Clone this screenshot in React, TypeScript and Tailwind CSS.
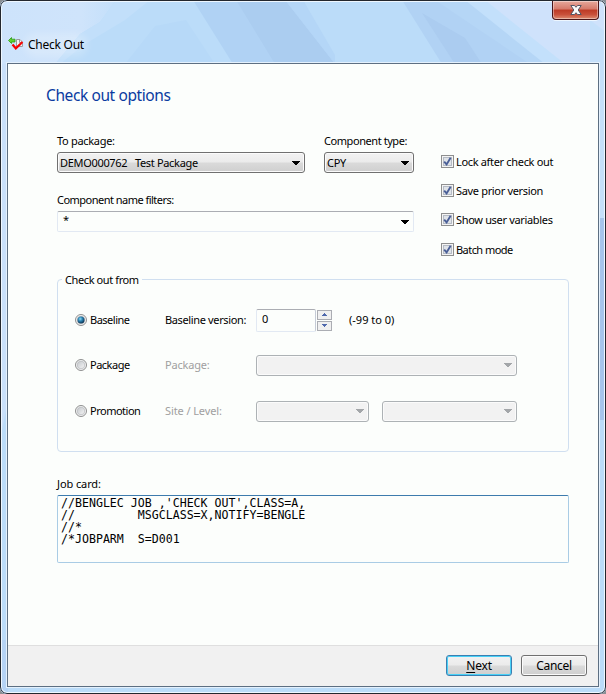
import React from "react";

const ui = "font-['Noto_Sans','Open_Sans',sans-serif]";

function Label({ children, className = "tracking-[-0.3px]" }: { children: React.ReactNode; className?: string }) {
  return (
    <span className={`block h-4 whitespace-pre text-[11px] leading-4 ${className}`}>{children}</span>
  );
}

function Arrow({ className = "fill-black" }: { className?: string }) {
  return (
    <svg width="8" height="4" viewBox="0 0 8 4" shapeRendering="crispEdges" className={`shrink-0 ${className}`}>
      <path d="M0 0h8v1h-1v1h-1v1h-1v1h-2v-1h-1v-1h-1v-1h-1z" />
    </svg>
  );
}

function Combo({ text = "", disabled = false, className = "" }: { text?: string; disabled?: boolean; className?: string }) {
  const look = disabled
    ? "border-[#adb2b5] bg-[#f2f2f2]"
    : "border-[#707070] bg-[linear-gradient(#f2f2f2_0%,#ebebeb_48%,#dadada_52%,#cfcfcf_100%)]";
  return (
    <div className={`flex h-[21px] shrink-0 items-center justify-between rounded-[3px] border pl-0.5 pr-1 shadow-[inset_0_0_0_1px_#fbfbfb] ${look} ${className}`}>
      <Label className="tracking-[-0.32px]">{text}</Label>
      <Arrow className={disabled ? "fill-[#a3a6a9]" : "fill-black"} />
    </div>
  );
}

function Check({ label, tracking = "tracking-[-0.33px]", className = "" }: { label: string; tracking?: string; className?: string }) {
  return (
    <div className={`flex h-[13px] items-center gap-0.5 ${className}`}>
      <svg width="13" height="13" viewBox="0 0 13 13" className="shrink-0">
        <rect x="0.5" y="0.5" width="12" height="12" fill="#f4f4f4" stroke="#8e8f8f" />
        <rect x="2.5" y="2.5" width="8" height="8" fill="#dfe3e8" stroke="#b5bbc4" />
        <path d="M3.2 6.6L5.6 9.4L9.6 2.8" fill="none" stroke="#4a5f97" strokeWidth="1.9" />
      </svg>
      <Label className={tracking}>{label}</Label>
    </div>
  );
}

function Radio({ label, on = false }: { label: string; on?: boolean }) {
  return (
    <div className="flex w-[90px] shrink-0 items-center gap-[3px]">
      <svg width="12" height="12" viewBox="0 0 12 12" className="shrink-0">
        <defs>
          <radialGradient id="dot" cx="0.4" cy="0.35" r="0.65">
            <stop offset="0" stopColor="#8fdcf5" />
            <stop offset="0.45" stopColor="#2e86b5" />
            <stop offset="1" stopColor="#0c3454" />
          </radialGradient>
          <linearGradient id="well" x1="0" y1="0" x2="1" y2="1">
            <stop offset="0" stopColor="#c4c8cc" />
            <stop offset="1" stopColor="#f6f6f6" />
          </linearGradient>
        </defs>
        <circle cx="6" cy="6" r="5.5" fill="#f4f4f4" stroke="#8e8f8f" />
        <circle cx="6" cy="6" r="3.8" fill="url(#well)" stroke="#b4b8bc" strokeWidth="0.7" />
        {on && <circle cx="6" cy="6" r="3.5" fill="url(#dot)" />}
      </svg>
      <Label className="tracking-[-0.5px]">{label}</Label>
    </div>
  );
}

function SpinButton({ up = false }: { up?: boolean }) {
  return (
    <div className="flex h-2.5 w-[15px] items-center justify-center border border-[#abadb3] bg-[#f0f0f0]">
      <svg width="5" height="3" viewBox="0 0 5 3" shapeRendering="crispEdges" className="fill-[#5069ad]">
        <path d={up ? "M2 0h1v1h1v1h1v1h-5v-1h1v-1h1z" : "M0 0h5v1h-1v1h-1v1h-1v-1h-1v-1h-1z"} />
      </svg>
    </div>
  );
}

function TitleGlass() {
  return (
    <svg width="606" height="694" className="absolute inset-0">
      <defs>
        <linearGradient id="sheen" x1="0" y1="0" x2="1" y2="0">
          <stop offset="0" stopColor="#cde3fb" />
          <stop offset="0.7" stopColor="#cfe4fb" />
          <stop offset="1" stopColor="#c3dffa" />
        </linearGradient>
      </defs>
      <rect width="606" height="694" fill="#bbdcf9" />
      <path d="M0 0H116L100 22L80 34L55 64H0z" fill="url(#sheen)" />
      <path d="M116 0H150L125 20L85 44L60 64H55L80 34L100 22z" fill="#c2dffa" />
      <path d="M155 26L125 64H215L186 20z" fill="#b7d9f8" />
      <path d="M193 0H303L335 64H233z" fill="#b0d2f4" />
      <path d="M236 0H285L335 64H275z" fill="#abcdf0" />
      <path d="M285 0H303L335 55V64z" fill="#b4d6f7" />
      <path d="M402 0H440L540 64H442z" fill="#b1d2f4" />
      <path d="M422 13L465 38L482 64H455z" fill="#abccf0" />
      <path d="M435 0H480L565 64H530z" fill="#b5d6f6" />
      <path d="M465 0H500L565 64H545z" fill="#c3e0fb" />
      <path d="M485 0H606V190H598L565 64z" fill="#cfe2fb" />
      <path d="M590 20L606 32V220H590z" fill="#c5e0fa" />
      <path d="M598 218H606V420H598z" fill="#a5c5eb" />
      <path d="M0 64H8V400L0 440z" fill="#c9e0fa" />
      <path d="M0 640H8V694H0z" fill="#b5d3f5" />
    </svg>
  );
}

function CheckOutIcon() {
  return (
    <svg width="16" height="14" viewBox="0 0 16 14" className="shrink-0">
      <path d="M8.5 2.5h3.5l2.500 2.500v4.500h-6z" fill="#f4f4f4" stroke="#9a9a9a" />
      <path d="M11.500 2.500v3h3" fill="none" stroke="#9a9a9a" />
      <path d="M0.500 3.500L3.500 0.500V2.200H7V5H3.500V6.500z" fill="#5fd32f" stroke="#2d9a14" strokeWidth="0.8" />
      <path d="M4.500 7.500L7.800 11.300L14.500 5" fill="none" stroke="#f80000" strokeWidth="2.2" />
    </svg>
  );
}

export default function App() {
  return (
    <div className={`relative h-[694px] w-[606px] overflow-hidden bg-[#8a8f94] text-black ${ui}`}>
      <div className="relative flex h-[694px] w-[606px] flex-col overflow-hidden rounded-[7px]">
        <TitleGlass />
        <div className="absolute inset-0 rounded-[7px] border border-[#23272e] shadow-[inset_0_0_0_1px_#eef7ff]" />

        <header className="relative flex h-[63px] shrink-0 justify-between pl-2 pr-[7px]">
          <div className="flex items-start gap-1 pt-[37px]">
            <CheckOutIcon />
            <span className="rounded-full bg-white/20 text-[12px] leading-4 tracking-[-0.25px] shadow-[0_0_7px_4px_rgba(255,255,255,0.2)]">Check Out</span>
          </div>
          <button className="mt-px flex h-[19px] w-[47px] items-center justify-center rounded-b-[4px] border border-t-0 border-[#4a1518] bg-[linear-gradient(#e6a89c_0%,#d5796a_45%,#bd3a25_50%,#c9503a_75%,#dd8b70_100%)] shadow-[inset_0_0_0_1px_rgba(255,255,255,0.4),0_1px_0_#eef7ff]">
            <svg width="12" height="10" viewBox="0 0 12 10">
              <path d="M.8 .5h3.700L6 2.300L7.500 .5H11.200L8.200 5L11.200 9.500H7.500L6 7.700L4.500 9.500H.8L3.800 5z" fill="#fafafa" stroke="#535666" strokeWidth="1" />
            </svg>
          </button>
        </header>

        <main className="relative mx-[7px] flex h-[624px] shrink-0 flex-col border border-[#5d6f82] bg-[#fcfefc] shadow-[0_0_0_1px_#e4f1fd]">
          <div className="flex h-[581px] shrink-0 flex-col pl-[49px]">
            <h1 className="-ml-[11px] mt-5 h-[22px] whitespace-nowrap text-[15.5px] leading-[22px] tracking-[-0.4px] text-[#0a3ba0]">Check out options</h1>

            <div className="mt-[27px] flex">
              <div className="w-[357px]">
                <div className="flex gap-[19px]">
                  <div className="flex w-[248px] flex-col gap-[3px]">
                    <Label>To package:</Label>
                    <Combo text="DEMO000762   Test Package" />
                  </div>
                  <div className="flex w-[90px] flex-col gap-[3px]">
                    <Label className="tracking-[-0.43px]">Component type:</Label>
                    <Combo text="CPY" />
                  </div>
                </div>
                <Label className="mt-[19px] tracking-[-0.52px]">Component name filters:</Label>
                <div className="mt-[3px] flex h-[21px] items-center justify-between rounded-[2px] border border-[#e2e9f3] border-t-[#abadb3] pl-[5px] pr-1">
                  <Label className="-mt-1">*</Label>
                  <Arrow />
                </div>
              </div>
              <div className="ml-[27px] mt-[22px] flex flex-col gap-4">
                <Check label="Lock after check out" />
                <Check label="Save prior version" />
                <Check label="Show user variables" />
                <Check label="Batch mode" className="mt-px" tracking="tracking-[-0.55px]" />
              </div>
            </div>

            <fieldset className="mt-[15px] h-[181px] w-[512px] rounded-[4px] border border-[#d0dff0] pl-[17px]">
              <legend className="-ml-[13px] px-[3px]">
                <Label className="relative top-px tracking-[-0.4px]">Check out from</Label>
              </legend>
              <div className="mt-[21px] flex h-6 items-center">
                <Radio label="Baseline" on />
                <Label className="w-[91px] tracking-[-0.36px]">Baseline version:</Label>
                <div className="h-[23px] w-[60px] rounded-[2px] border border-[#e2e9f3] border-t-[#abadb3] border-r-[#c5cbd6] pl-[5px]">
                  <Label className="mt-px">0</Label>
                </div>
                <div className="ml-px flex flex-col gap-px">
                  <SpinButton up />
                  <SpinButton />
                </div>
                <Label className="ml-[17px] tracking-[0px]">(-99 to 0)</Label>
              </div>
              <div className="mt-[21px] flex h-6 items-center">
                <Radio label="Package" />
                <Label className="w-[91px] tracking-[-0.2px] text-[#a0a0a0]">Package:</Label>
                <Combo disabled className="w-[261px]" />
              </div>
              <div className="mt-[22px] flex h-6 items-center">
                <Radio label="Promotion" />
                <Label className="w-[91px] tracking-[-0.1px] text-[#a0a0a0]">Site / Level:</Label>
                <Combo disabled className="w-[113px]" />
                <Combo disabled className="ml-[13px] w-[135px]" />
              </div>
            </fieldset>

            <Label className="mt-6 tracking-[-0.1px]">Job card:</Label>
            <div className="mt-[3px] h-[68px] w-[512px] rounded-[2px] border border-[#a9cce5] border-t-[#3d7bad] pl-[3px] pt-px">
              <pre className="font-['DejaVu_Sans_Mono',monospace] text-[11.600px] leading-[12px]">{"//BENGLEC JOB ,'CHECK OUT',CLASS=A,\n//         MSGCLASS=X,NOTIFY=BENGLE\n//*\n/*JOBPARM  S=D001"}</pre>
            </div>
          </div>

          <footer className="flex h-[41px] shrink-0 items-start justify-end gap-[9px] border-t border-[#dfdfdf] bg-[#f1f1f1] pr-[11px] pt-[9px]">
            <button className="h-[21px] w-[66px] rounded-[3px] border border-[#3c7fb1] bg-[linear-gradient(#f2f2f2_0%,#ebebeb_48%,#dadada_52%,#cfcfcf_100%)] text-[12px] leading-[19px] tracking-[-0.2px] shadow-[inset_0_0_0_1px_#48d1f7]"><span className="underline underline-offset-2">N</span>ext</button>
            <button className="h-[21px] w-[66px] rounded-[3px] border border-[#707070] bg-[linear-gradient(#f2f2f2_0%,#ebebeb_48%,#dadada_52%,#cfcfcf_100%)] text-[12px] leading-[19px] tracking-[-0.3px] shadow-[inset_0_0_0_1px_#fbfbfb]">Cancel</button>
          </footer>
        </main>
      </div>
    </div>
  );
}
